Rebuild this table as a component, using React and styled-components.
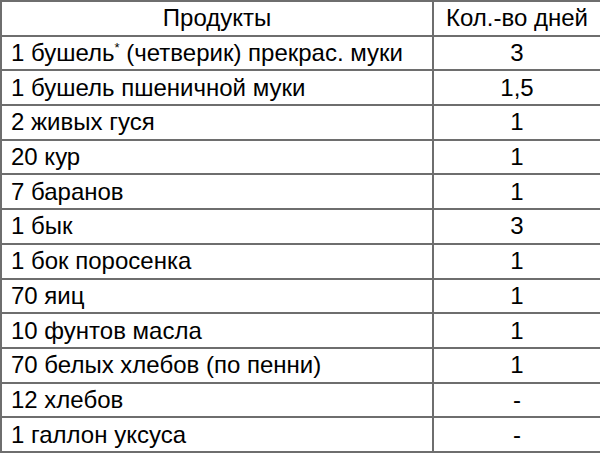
import React from "react";
import styled, { createGlobalStyle } from "styled-components";

const Global = createGlobalStyle`
  html, body { margin: 0; padding: 0; background: #fff; }
  body { font-family: "Liberation Sans", Arial, sans-serif; }
`;

const Table = styled.table`
  width: 600px;
  height: 453px;
  border-collapse: collapse;
  table-layout: fixed;
  border: 2px solid #333;
  font-family: "Liberation Sans", Arial, sans-serif;
  font-size: 24px;
  color: #000;
`;

const Row = styled.tr`
  height: 34.7px;
`;

const Cell = styled.td`
  padding: 0 0 0 9px;
  border: 2px solid #6e6e6e;
  text-align: ${(p) => (p.$center ? "center" : "left")};
  vertical-align: middle;
  white-space: nowrap;
  line-height: 1;
  ${(p) => p.$center && "padding: 0;"}
`;

const HeadCell = styled.th`
  padding: 0;
  border: 2px solid #6e6e6e;
  font-weight: normal;
  text-align: center;
  vertical-align: middle;
  line-height: 1;
  white-space: nowrap;
`;

const Star = styled.sup`
  font-size: 13px;
  vertical-align: 9px;
  line-height: 0;
`;

const rows = [
  [<>1 бушель<Star>*</Star> (четверик) прекрас. муки</>, "3"],
  ["1 бушель пшеничной муки", "1,5"],
  ["2 живых гуся", "1"],
  ["20 кур", "1"],
  ["7 баранов", "1"],
  ["1 бык", "3"],
  ["1 бок поросенка", "1"],
  ["70 яиц", "1"],
  ["10 фунтов масла", "1"],
  ["70 белых хлебов (по пенни)", "1"],
  ["12 хлебов", "-"],
  ["1 галлон уксуса", "-"],
];

export default function App() {
  return (
    <>
      <Global />
      <Table>
        <colgroup>
          <col style={{ width: "432px" }} />
          <col style={{ width: "168px" }} />
        </colgroup>
        <thead>
          <Row>
            <HeadCell>Продукты</HeadCell>
            <HeadCell>Кол.-во дней</HeadCell>
          </Row>
        </thead>
        <tbody>
          {rows.map(([name, days], i) => (
            <Row key={i}>
              <Cell>{name}</Cell>
              <Cell $center>{days}</Cell>
            </Row>
          ))}
        </tbody>
      </Table>
    </>
  );
}
